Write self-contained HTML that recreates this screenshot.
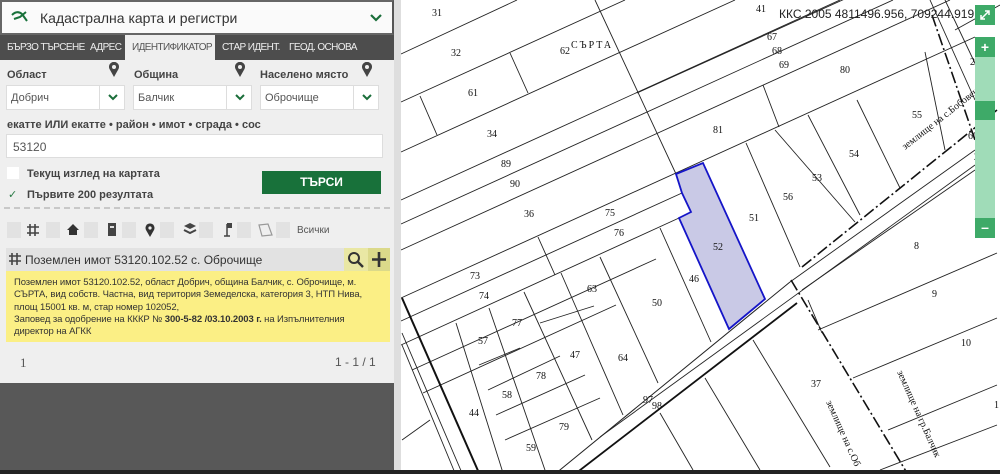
<!DOCTYPE html>
<html><head><meta charset="utf-8"><style>
*{margin:0;padding:0;box-sizing:border-box}
body{width:1000px;height:474px;overflow:hidden;background:#fff;font-family:"Liberation Sans",sans-serif;position:relative}
#panel{position:absolute;left:0;top:0;width:394px;height:470px;background:#585858}
#inner{position:absolute;left:0;top:0;width:394px;height:383px;background:#efefef}
.hdr{position:absolute;left:0;top:0;width:394px;height:35px;background:#fafafa;border:2px solid #666;border-right:2px solid #555}
.hdr span{position:absolute;left:38px;top:8px;font-size:14px;color:#333}
.tabs{position:absolute;left:0;top:35px;width:394px;height:25px;background:#4d4d4d}
.tab{position:absolute;top:7px;font-size:10px;color:#eee;letter-spacing:-0.6px;white-space:nowrap}
.tab.act{top:0;height:25px;background:#efefef;color:#555;padding:7px 7px 0;width:90px}
.lbl{position:absolute;font-size:11px;font-weight:bold;color:#444}
.sel{position:absolute;top:85px;height:25px;width:119px;background:#fff;border:1px solid #ddd;font-size:11px;color:#555;padding:6px 4px}
.sel i{position:absolute;right:0;top:0;width:25px;height:23px;border-left:1px solid #ddd}
.pin{position:absolute;top:62px}
.inp{position:absolute;left:6px;top:134px;width:377px;height:24px;background:#fff;border:1px solid #ddd;font-size:12px;color:#555;padding:5px 6px}
.btn{position:absolute;left:262px;top:171px;width:119px;height:23px;background:#18713a;color:#fff;font-weight:bold;font-size:12px;text-align:center;line-height:23px}
.cb{position:absolute;width:14px;height:16px;background:#e2e2e2}
.res{position:absolute;left:6px;top:248px;width:384px;height:23px;background:#e2e2e2;font-size:12px;color:#333}
.yel{position:absolute;left:6px;top:271px;width:384px;height:71px;background:#fbef85;font-size:9.5px;line-height:12.3px;color:#333;padding:6px 8px;letter-spacing:-0.1px}
.strip{position:absolute;left:394px;top:0;width:7px;height:470px;background:#dedede}
.bot{position:absolute;left:0;top:470px;width:1000px;height:4px;background:#222}
svg text{font-family:"Liberation Serif",serif;font-size:10px;fill:#111}
.zb{position:absolute;left:975px;width:20px;background:#3eaa68}
</style></head><body>
<svg style="position:absolute;left:0;top:0" width="1000" height="474">
<g stroke="#222" stroke-width="0.9" fill="none">
<line x1="401" y1="54" x2="517" y2="0"/>
<line x1="401" y1="102" x2="625" y2="0"/>
<line x1="401" y1="152" x2="735" y2="0"/>
<line x1="401" y1="200" x2="840" y2="0"/>
<line x1="401" y1="224" x2="893" y2="0"/>
<line x1="401" y1="250" x2="950" y2="0"/>
<line x1="401" y1="298" x2="975" y2="37"/>
<line x1="401" y1="321" x2="682" y2="193"/>
<line x1="401" y1="345" x2="679" y2="218"/>
<line x1="412" y1="370" x2="656" y2="259"/>
<line x1="423" y1="393" x2="616" y2="305"/>
<line x1="595" y1="0" x2="676" y2="174"/>
<line x1="510" y1="53" x2="528" y2="93"/>
<line x1="420" y1="96" x2="437" y2="135"/>
<line x1="637" y1="93" x2="975" y2="-60"/>
<line x1="538" y1="237" x2="555" y2="275"/>
<line x1="456" y1="323" x2="503" y2="473"/>
<line x1="489" y1="308" x2="546" y2="473"/>
<line x1="524" y1="292" x2="592" y2="440"/>
<line x1="561" y1="273" x2="623" y2="415"/>
<line x1="600" y1="257" x2="658" y2="383"/>
<line x1="660" y1="228" x2="711" y2="342"/>
<line x1="479" y1="365" x2="520" y2="348"/>
<line x1="488" y1="390" x2="560" y2="356"/>
<line x1="496" y1="415" x2="585" y2="375"/>
<line x1="505" y1="440" x2="600" y2="398"/>
<line x1="540" y1="323" x2="594" y2="306"/>
<line x1="753" y1="340" x2="830" y2="467"/>
<line x1="705" y1="378" x2="760" y2="470"/>
<line x1="660" y1="413" x2="693" y2="470"/>
<line x1="746" y1="143" x2="800" y2="267"/>
<line x1="775" y1="130" x2="855" y2="222"/>
<line x1="808" y1="115" x2="860" y2="215"/>
<line x1="857" y1="100" x2="900" y2="188"/>
<line x1="763" y1="85" x2="779" y2="127"/>
<line x1="925" y1="52" x2="945" y2="150"/>
<line x1="818" y1="330" x2="997" y2="253"/>
<line x1="853" y1="378" x2="997" y2="318"/>
<line x1="888" y1="430" x2="997" y2="385"/>
<line x1="880" y1="470" x2="997" y2="425"/>
<line x1="808" y1="300" x2="822" y2="333"/>
<line x1="600" y1="437" x2="975" y2="165"/>
<line x1="790" y1="282" x2="975" y2="150"/>
<line x1="802" y1="290" x2="975" y2="170"/>
<line x1="402" y1="333" x2="462" y2="473"/>
<line x1="402" y1="345" x2="455" y2="473"/>
<line x1="402" y1="440" x2="430" y2="420"/>
<line x1="930" y1="0" x2="975" y2="100"/>
<line x1="945" y1="0" x2="990" y2="95"/>
<line x1="955" y1="30" x2="1000" y2="5"/>
</g>
<line x1="402" y1="298" x2="479" y2="473" stroke="#111" stroke-width="2"/>
<line x1="555" y1="474" x2="790" y2="282" stroke="#222" stroke-width="1"/>
<line x1="575" y1="474" x2="797" y2="303" stroke="#111" stroke-width="1.8"/>
<g stroke="#111" stroke-width="1.6" fill="none" stroke-dasharray="12,3,2,3">
<line x1="802" y1="267" x2="997" y2="110"/>
<line x1="791" y1="280" x2="907" y2="473"/>
<line x1="932" y1="15" x2="975" y2="140"/>
</g>
<polygon points="676,174 703,163 765,299 729,329 679,218 691,212 682,193" fill="#c9c9e6" stroke="#1515c8" stroke-width="1.8"/>
<g>
<text x="432" y="16">31</text><text x="756" y="12">41</text><text x="451" y="56">32</text><text x="560" y="54">62</text>
<text x="571" y="48" style="letter-spacing:2px">СЪРТА</text>
<text x="767" y="40">67</text><text x="772" y="54">68</text><text x="779" y="68">69</text><text x="840" y="73">80</text>
<text x="468" y="96">61</text><text x="713" y="133">81</text><text x="487" y="137">34</text><text x="912" y="118">55</text>
<text x="849" y="157">54</text><text x="501" y="167">89</text><text x="510" y="187">90</text><text x="812" y="181">53</text>
<text x="524" y="217">36</text><text x="605" y="216">75</text><text x="783" y="200">56</text><text x="749" y="221">51</text>
<text x="614" y="236">76</text><text x="713" y="250">52</text><text x="914" y="249">8</text><text x="470" y="279">73</text>
<text x="479" y="299">74</text><text x="689" y="282">46</text><text x="587" y="292">63</text><text x="652" y="306">50</text>
<text x="932" y="297">9</text><text x="512" y="326">77</text><text x="478" y="344">57</text><text x="570" y="358">47</text>
<text x="618" y="361">64</text><text x="961" y="346">10</text><text x="536" y="379">78</text><text x="811" y="387">37</text>
<text x="502" y="398">58</text><text x="469" y="416">44</text><text x="559" y="430">79</text><text x="643" y="403">97</text>
<text x="652" y="409">98</text><text x="526" y="451">59</text><text x="970" y="65">21</text><text x="968" y="139">605</text>
<text x="978" y="152">234</text><text x="974" y="160">240</text><text x="994" y="408">1</text>
<text transform="translate(905,150) rotate(-38)">землище на с.Бобовец</text>
<text transform="translate(826,402) rotate(66)">землище на с.Об</text>
<text transform="translate(897,372) rotate(66)">землище на гр.Балчик</text>
</g>
<text x="779" y="18" style="font-family:'Liberation Sans',sans-serif;font-size:12px;fill:#222">ККС 2005 4811496.956, 709244.919</text>
</svg>
<div class="zb" style="top:5px;height:20px"><svg width="20" height="20"><path d="M6 14 L14 6 M10 6 H14 V10 M6 10 V14 H10" stroke="#fff" stroke-width="1.5" fill="none"/></svg></div>
<div class="zb" style="top:37px;height:20px;color:#fff;text-align:center;font-weight:bold;font-size:14px;line-height:20px">+</div>
<div class="zb" style="top:57px;height:161px;background:#a0dcb8"></div>
<div class="zb" style="top:101px;height:19px;background:#3eaa68"></div>
<div class="zb" style="top:218px;height:20px;color:#fff;text-align:center;font-weight:bold;font-size:14px;line-height:18px">–</div>

<div class="strip"></div>
<div id="panel"><div id="inner">
<div class="hdr"><svg style="position:absolute;left:9px;top:8px" width="18" height="14"><path d="M1 5 Q6 0 11 4 L16 11 M3 9 L9 7 L15 2" stroke="#18713a" stroke-width="2" fill="none"/></svg><span>Кадастрална карта и регистри</span>
<svg style="position:absolute;right:10px;top:12px" width="12" height="8"><path d="M1 1 L6 6 L11 1" stroke="#1a6e3a" stroke-width="2.2" fill="none"/></svg></div>
<div class="tabs">
<span class="tab" style="left:7px">БЪРЗО ТЪРСЕНЕ</span>
<span class="tab" style="left:90px">АДРЕС</span>
<span class="tab act" style="left:125px">ИДЕНТИФИКАТОР</span>
<span class="tab" style="left:222px">СТАР ИДЕНТ.</span>
<span class="tab" style="left:289px">ГЕОД. ОСНОВА</span>
</div>
<span class="lbl" style="left:7px;top:69px">Област</span>
<span class="lbl" style="left:134px;top:69px">Община</span>
<span class="lbl" style="left:260px;top:69px">Населено място</span>
<svg class="pin" style="left:108px" width="12" height="16"><path d="M6 15 L1.5 7 A5 5 0 1 1 10.5 7 Z" fill="#444"/><circle cx="6" cy="5" r="2" fill="#efefef"/></svg>
<svg class="pin" style="left:234px" width="12" height="16"><path d="M6 15 L1.5 7 A5 5 0 1 1 10.5 7 Z" fill="#444"/><circle cx="6" cy="5" r="2" fill="#efefef"/></svg>
<svg class="pin" style="left:361px" width="12" height="16"><path d="M6 15 L1.5 7 A5 5 0 1 1 10.5 7 Z" fill="#444"/><circle cx="6" cy="5" r="2" fill="#efefef"/></svg>
<div class="sel" style="left:6px">Добрич<i><svg style="position:absolute;left:8px;top:8px" width="10" height="7"><path d="M1 1 L5 5 L9 1" stroke="#1a6e3a" stroke-width="2" fill="none"/></svg></i></div>
<div class="sel" style="left:133px">Балчик<i><svg style="position:absolute;left:8px;top:8px" width="10" height="7"><path d="M1 1 L5 5 L9 1" stroke="#1a6e3a" stroke-width="2" fill="none"/></svg></i></div>
<div class="sel" style="left:260px">Оброчище<i><svg style="position:absolute;left:8px;top:8px" width="10" height="7"><path d="M1 1 L5 5 L9 1" stroke="#1a6e3a" stroke-width="2" fill="none"/></svg></i></div>
<span class="lbl" style="left:7px;top:119px">екатте ИЛИ екатте • район • имот • сграда • сос</span>
<div class="inp">53120</div>
<div style="position:absolute;left:7px;top:167px;width:12px;height:12px;background:#fff"></div>
<span class="lbl" style="left:27px;top:168px">Текущ изглед на картата</span>
<span style="position:absolute;left:8px;top:188px;font-size:11px;color:#2a7a46">✓</span>
<span class="lbl" style="left:27px;top:189px">Първите 200 резултата</span>
<div class="btn">ТЪРСИ</div>
<div style="position:absolute;left:4px;top:207px;width:386px;border-top:2px dashed #c8c8c8"></div>
<div class="cb" style="left:7px;top:222px"></div><div class="cb" style="left:46px;top:222px"></div><div class="cb" style="left:84px;top:222px"></div><div class="cb" style="left:122px;top:222px"></div><div class="cb" style="left:160px;top:222px"></div><div class="cb" style="left:199px;top:222px"></div><div class="cb" style="left:237px;top:222px"></div><div class="cb" style="left:276px;top:222px"></div>
<svg style="position:absolute;left:0;top:218px" width="394" height="24">
<path d="M30 6 V18 M35 6 V18 M27 9 H39 M27 15 H39" stroke="#444" stroke-width="1.6"/>
<path d="M67 12 L73 6 L79 12 H77 V17 H69 V12 Z" fill="#333"/>
<rect x="108" y="5" width="8" height="13" fill="#444"/><rect x="110" y="8" width="4" height="2" fill="#ddd"/>
<path d="M150 19 L146 12 A4.5 4.5 0 1 1 154 12 Z" fill="#333"/><circle cx="150" cy="10" r="1.6" fill="#efefef"/>
<path d="M184 8 L190 5 L196 8 L190 11 Z" fill="#444"/><path d="M184 12 L190 15 L196 12" stroke="#444" stroke-width="2" fill="none"/>
<path d="M227 6 V18 M224 18 H230" stroke="#444" stroke-width="1.5"/><rect x="227" y="5" width="5" height="5" fill="#444"/>
<path d="M259 7 L268 6 L272 17 L262 18 Z" stroke="#999" stroke-width="1.2" fill="none"/>
<text x="297" y="15" style="font-family:'Liberation Sans',sans-serif;font-size:10px;fill:#555">Всички</text>
</svg>
<div class="res"><svg style="position:absolute;left:3px;top:5px" width="12" height="12"><path d="M3 0 V12 M8 0 V12 M0 3 H12 M0 8 H12" stroke="#444" stroke-width="1.6"/></svg><span style="position:absolute;left:19px;top:5px">Поземлен имот 53120.102.52 с. Оброчище</span>
<div style="position:absolute;left:338px;top:0;width:24px;height:23px;background:#e9e7a4"><svg width="24" height="23"><circle cx="10" cy="10" r="5" stroke="#333" stroke-width="2" fill="none"/><path d="M14 14 L19 19" stroke="#333" stroke-width="2.4"/></svg></div>
<div style="position:absolute;left:362px;top:0;width:22px;height:23px;background:#dbd98a"><svg width="22" height="23"><path d="M11 4 V19 M4 11.5 H18" stroke="#333" stroke-width="2.6"/></svg></div>
</div>
<div class="yel">Поземлен имот 53120.102.52, област Добрич, община Балчик, с. Оброчище, м. СЪРТА, вид собств. Частна, вид територия Земеделска, категория 3, НТП Нива, площ 15001 кв. м, стар номер 102052,<br>Заповед за одобрение на КККР № <b>300-5-82 /03.10.2003 г.</b> на Изпълнителния директор на АГКК</div>
<span style="position:absolute;left:20px;top:355px;font-family:'Liberation Serif',serif;font-size:13px;color:#555">1</span>
<span style="position:absolute;left:335px;top:355px;font-size:12px;color:#555">1 - 1 / 1</span>
</div></div>
<div class="bot"></div>
</body></html>
